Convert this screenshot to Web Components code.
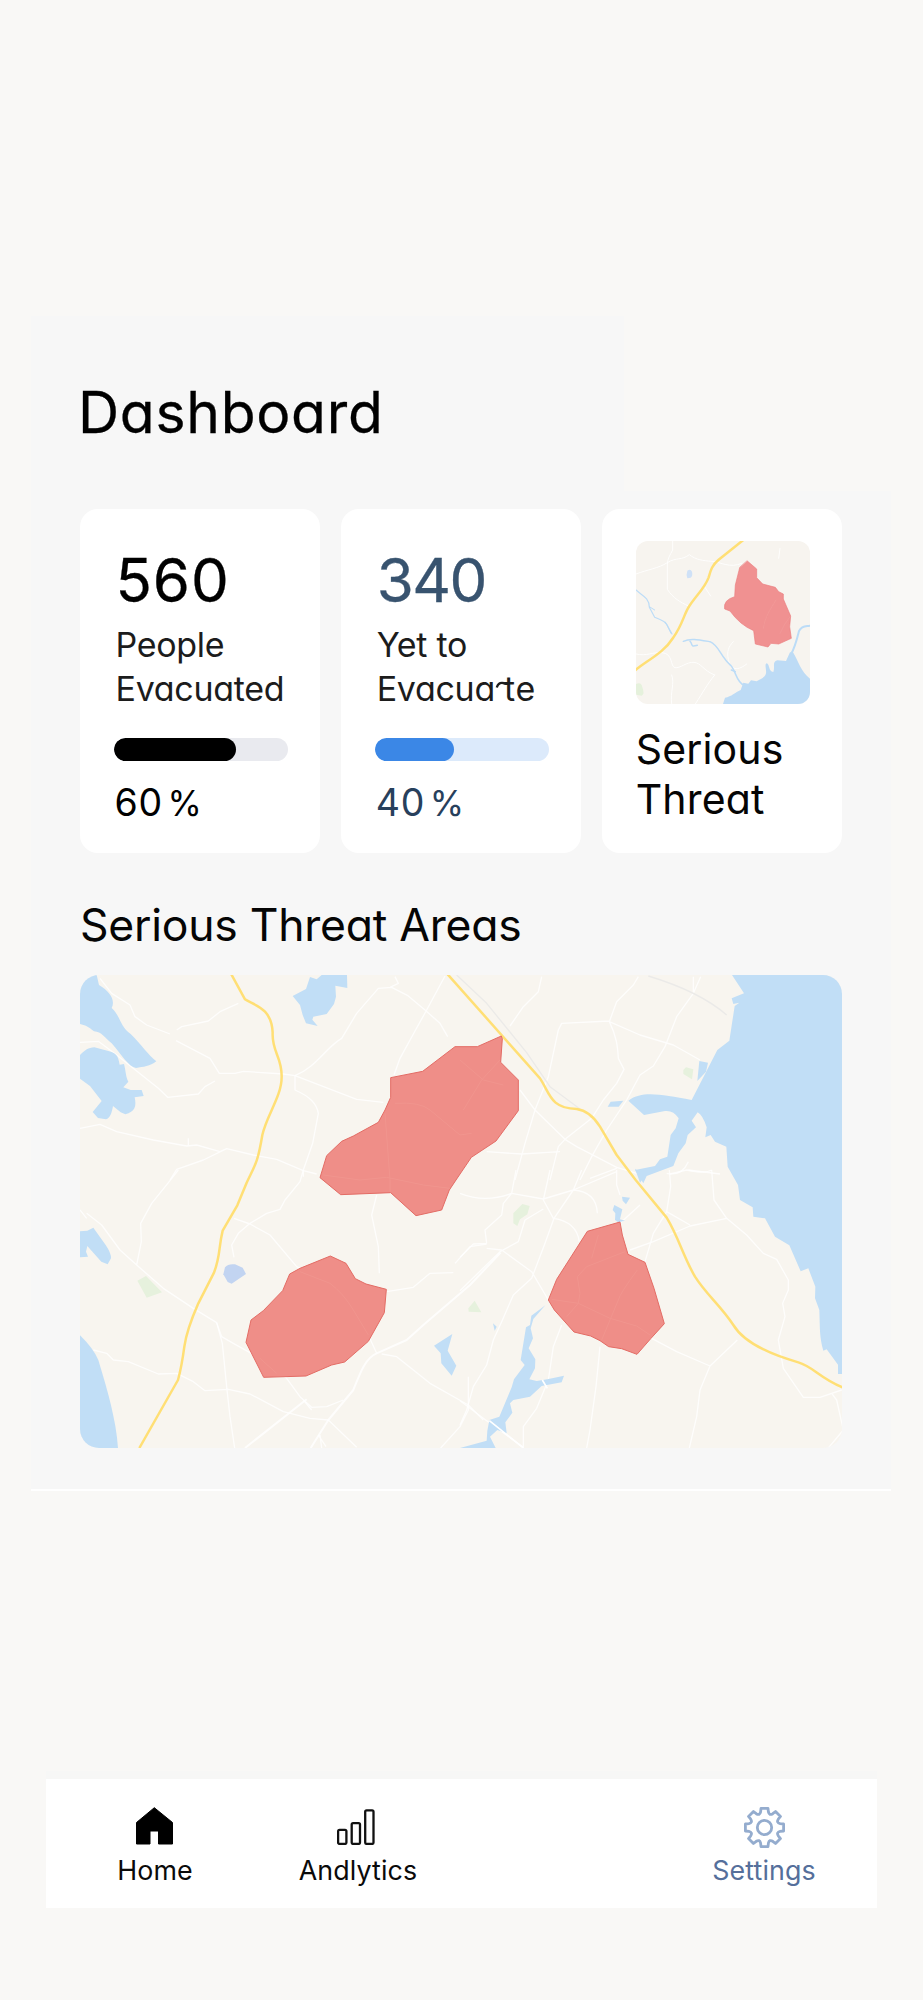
<!DOCTYPE html>
<html lang="en">
<head>
<meta charset="utf-8">
<title>Dashboard</title>
<style>
  html, body { margin: 0; background: #f9f8f6; }
  body { font-family: Inter, "Liberation Sans", sans-serif; font-feature-settings: "cv11"; color: #050505; }
</style>
</head>
<body>
<app-shell>
  <dash-board slot="main" heading="Dashboard">
    <stat-card slot="card" value="560" percent="60" fill="70.2"
      style="--value:#000;--value-gap:.9px;--bar:#000;--track:#e9eaef;--pct:#000">
      <span>People</span><span>Evacuated</span>
    </stat-card>
    <stat-card slot="card" value="340" percent="40" fill="45.2"
      style="--value:#38536f;--value-gap:-1.5px;--bar:#3b87e6;--track:#dceafb;--pct:#27405c">
      <span>Yet to</span><span>Evacua<joined-te></joined-te></span>
    </stat-card>
    <threat-card slot="card"><span>Serious</span><span>Threat</span></threat-card>
    <threat-map slot="map"></threat-map>
  </dash-board>
  <nav-bar slot="nav">
    <nav-item icon="home">Home</nav-item>
    <nav-item icon="bars">Andlytics</nav-item>
    <nav-item icon="gear" style="grid-column:4;color:#556f9b">Settings</nav-item>
  </nav-bar>
</app-shell>

<script>
const define = (name, html, setup) => customElements.define(name, class extends HTMLElement {
  constructor() {
    super();
    this.attachShadow({ mode: "open" }).innerHTML = html;
  }
  connectedCallback() { if (setup) setup(this, this.shadowRoot); }
});

define("app-shell", `
<style>
  :host { display: flex; flex-direction: column; box-sizing: border-box; height: 2000px; padding: 316px 0 92px; justify-content: space-between; }
</style>
<slot name="main"></slot><slot name="nav"></slot>`);

define("dash-board", `
<style>
  :host { display: block; box-sizing: border-box; width: 860px; height: 1175px; margin-left: 31px; padding: 66.5px 49px 0;
    border-bottom: 2px solid #fff;
    background: linear-gradient(#f7f7f7,#f7f7f7) 0 0 / 593px 100% no-repeat, linear-gradient(#f7f7f7,#f7f7f7) 0 175px / 100% 1000px no-repeat; }
  h1 { margin: 0 0 66px -2px; font: 400 57px/60px Inter, sans-serif; letter-spacing: .7px; color: #000; font-feature-settings: inherit; -webkit-text-stroke: .3px; }
  h2 { margin: 47px 0 25px; font: 400 44.5px/50px Inter, sans-serif; letter-spacing: -.25px; font-feature-settings: inherit; color: #050505; }
  .cards { display: grid; grid-template-columns: repeat(3, 1fr); gap: 21.5px; height: 344.5px; }
</style>
<h1></h1>
<div class="cards"><slot name="card"></slot></div>
<h2>Serious Threat Areas</h2>
<slot name="map"></slot>`,
(el, root) => { root.querySelector("h1").textContent = el.getAttribute("heading"); });

define("stat-card", `
<style>
  :host { display: block; background: #fff; border-radius: 18px; padding: 41px 32px 0 34px; }
  .value { padding-left: 1.5px; font-size: 60px; line-height: 60px; letter-spacing: var(--value-gap); color: var(--value); -webkit-text-stroke: .3px; }
  .label { display: flex; flex-direction: column; margin: 13.5px 0 27.5px; padding-left: 1.5px; font-size: 34px; line-height: 43.5px; letter-spacing: -.3px; color: #1c1c1c; white-space: nowrap; }
  .track { height: 23px; border-radius: 12px; background: var(--track); overflow: hidden; }
  .bar { height: 100%; border-radius: 12px; background: var(--bar); }
  .pct { margin-top: 22.5px; padding-left: .5px; display: flex; align-items: baseline; gap: 4.5px; font-size: 37.5px; line-height: 40px; letter-spacing: .8px; color: var(--pct); }
  .pct i { font-style: normal; font-size: 35px; letter-spacing: 0; }
</style>
<div class="value"></div>
<div class="label"><slot></slot></div>
<div class="track"><div class="bar"></div></div>
<div class="pct"><b style="font-weight:400"></b><i>%</i></div>`,
(el, root) => {
  root.querySelector(".value").textContent = el.getAttribute("value");
  root.querySelector(".bar").style.width = el.getAttribute("fill") + "%";
  root.querySelector("b").textContent = el.getAttribute("percent");
});

// "te" whose crossbar reaches back toward the preceding letter
define("joined-te", `
<style>
  :host { display: inline-block; position: relative; padding-left: 9px; letter-spacing: .8px; }
  svg { position: absolute; left: 1px; top: 0; width: 20px; height: 43.5px; overflow: visible; }
</style>te<svg viewBox="0 0 20 43.5"><path d="M.8 20.5C1.8 17.2 3.6 15.9 6 15.9c1.8 0 2.6.9 6 .9" fill="none" stroke="#1c1c1c" stroke-width="2.4"/></svg>`);

define("threat-card", `
<style>
  :host { display: block; background: #fff; border-radius: 18px; padding: 32px 31px 0 33.4px; }
  svg { display: block; width: 174px; height: 163px; border-radius: 12px; }
  .t { display: flex; flex-direction: column; margin-top: 20px; font-size: 41px; line-height: 50px; letter-spacing: .15px; color: #050505; }
</style>
<svg viewBox="138 123 522 489" fill="none" stroke-linecap="round" stroke-linejoin="round">
  <path fill="#f7f4ef" d="M138 123h522v489H138z"/>
  <g stroke="#fff" stroke-width="2.5">
    <path d="M138 222C175 208 205 205 232 188S275 182 298 164C318 180 340 182 366 184S420 206 455 190"/>
    <path d="M248 123V150C240 166 232 175 232 195V268C250 295 270 306 295 318M345 262L362 288M570 145L566 175"/>
    <path d="M138 462C170 470 190 455 216 458C250 460 240 500 255 503S290 485 312 487S340 512 374 525"/>
    <path d="M245 525C255 550 240 575 245 612M374 525C350 555 340 575 316 612M430 425C415 440 410 455 415 478S435 520 470 492M470 310L495 325" />
  </g>
  <path d="M138 552q16-8 19 10q8 20-2 25l-17-3z" fill="#e5f1dc"/>
  <path d="M292 212q10-6 14 3q3 12-4 18l-10 2q-4-12 0-23z" fill="#cfe1f7"/>
  <g stroke="#bcdcf7" stroke-width="4.5">
    <path d="M138 270C153 285 178 292 178 322L194 352C214 362 219 357 231 374L246 402" stroke-width="3.5"/>
    <path d="M226 366L243 400M178 320L194 330" stroke-width="3"/>
    <path d="M280 424C300 414 325 419 360 425C388 437 390 468 422 496C438 513 438 545 462 556"/>
    <path d="M300 424C310 435 300 442 322 436M424 510L436 515"/>
    <path d="M603 463C616 440 621 417 627 393C637 375 650 380 660 377" stroke-width="6"/>
  </g>
  <path fill="#bddbf5" d="M399 612L405 593C425 590 435 577 452 570L460 548L475 551L483 541L500 544C515 533 525 534 528 520C530 508 522 492 531 490C540 496 535 514 550 516C556 500 545 486 562 481L588 483L600 457H609C626 485 632 514 660 536V612z"/>
  <path stroke="#ffdf75" stroke-width="7.5" stroke-linecap="butt" d="M134 512C170 482 222 458 249 414C280 370 280 345 298 318C320 285 345 263 356 232C362 210 367 195 385 180L460 120"/>
  <path fill="#f09191" stroke="#eb7f80" stroke-width="2" d="M472 183L500 207V233L518 252L556 262L566 275L580 282V297L602 348L599 380L604 415L566 432L543 430L534 441L496 432L491 392Q450 375 420 333L404 327Q399 300 434 290L436 255L449 203z"/>
  <path stroke="#f29b9a" stroke-width="2" d="M558 300C540 330 525 350 520 385M600 350Q580 375 570 400"/>
</svg>
<div class="t"><slot></slot></div>`);

define("threat-map", `
<style>:host { display: block; height: 473px; } svg { display: block; width: 762px; height: 473px; border-radius: 19px; }</style>
<svg viewBox="30 285 2286 1419" preserveAspectRatio="none" fill="none" stroke-linejoin="round">
  <path fill="#f8f5ef" d="M30 285h2286v1419H30z"/>
  <g stroke="#fff" stroke-width="4" stroke-opacity=".8">
    <path d="M90 295L125 340L180 375L195 410L230 435L300 462M320 450L335 440L415 423L450 395L505 370M318 482L420 535L448 580H495L520 574L640 582L675 587L860 658L940 667"/>
    <path d="M30 487L85 484L140 525L215 585L265 625L293 652L385 642L405 620L435 603"/>
    <path d="M675 587C740 560 770 500 815 475L860 400L925 325L965 322L1012 346L1065 390L1110 430L1133 470M975 290L985 310L960 322M1125 288L1070 390L1030 462L990 535L972 585"/>
    <path d="M675 587V630C720 650 740 670 745 700L728 790L700 870V890M30 745L90 733L140 755L250 780L350 798L380 795L450 815L470 806L550 825L620 838L700 872L740 882M470 806L400 840L320 868L300 900M355 775V800"/>
    <g transform="translate(0 870)">
      <path d="M325 0L300 32L245 100L212 160L214 215L200 285L280 355L370 415L440 458L455 500L490 520L580 570L650 625L690 680L725 712L770 710L820 690M30 120L50 145M50 130L95 165L150 240L200 285"/>
      <path d="M700 0L690 35L645 90L630 118L590 130L540 160L505 190L485 225L492 262M492 145L540 162L600 195L680 290L780 340L860 420L920 550M920 75L905 135L925 230L928 310"/>
      <path d="M70 540L110 550L130 570L175 575L265 612L320 610L370 635L405 662L475 658L540 672L640 725L720 745L775 750L860 832M440 458L457 520L470 650L480 740L494 834"/>
      <path stroke-width="6" d="M525 834L710 688M722 834L775 750L850 660C870 610 885 565 920 550L1010 510L1060 465L1200 345L1292 248"/>
      <path d="M935 552L980 560L1080 640L1195 705L1240 750M1195 620V720L1170 770L1112 834M950 365L1030 352L1080 310L1150 308M1155 280L1200 230L1250 222M700 690L725 720M750 795L755 834M745 795L768 830"/>
    </g>
    <g transform="translate(1170 0)">
      <path d="M245 290L235 335L190 380L150 438M535 290L520 315L470 365L448 425C470 470 473 500 475 535L492 568L470 610L430 660L395 715L315 778M448 423L305 430L295 450L265 590L225 690L195 790L165 900M448 425L540 465L640 495L720 540M722 290L700 340L650 410L615 500L580 558L540 585L500 660L440 750L395 830L360 900M700 290V340M180 630L225 690L315 778L350 800L470 862L530 880M80 815L185 822L300 815M315 778L295 800L270 900M390 895L470 865"/>
      <path d="M620 880Q665 890 685 845M685 870L780 882"/>
    </g>
    <g transform="translate(1170 870)">
      <path d="M0 70Q75 100 155 70L250 87L340 60L470 5M168 0L155 70L130 100L125 135L75 180L80 220M365 0L340 60L282 145L255 220L215 325L160 375L125 455L100 510L80 585L40 650L20 720L0 765M340 60Q410 65 412 130M270 0L250 90L280 145Q350 155 358 215M80 220L40 222L0 262M80 235L125 240L215 305L265 390M0 362L120 245L175 215L195 150L250 117M470 0V45L480 75M480 160L540 105"/>
      <path d="M628 0L632 50L620 125L580 190L555 275M510 240L580 215L690 168L800 145M755 0L762 90L800 145L860 195L910 250L950 268L985 330V360L968 400L975 440L955 510L970 595L1030 682H1080L1145 660M620 125L690 165M1115 670L1130 690L1140 735L1150 780L1105 834M832 510L750 588L720 660L710 740L688 834M575 505L650 545L750 588"/>
      <path d="M0 692L80 752L190 832M420 530L408 650L390 780L380 834M305 465L280 530L265 630L230 715L190 770V834M630 12L680 0Q735 12 755 0"/>
    </g>
  </g>
  <g stroke="#ebeae8" stroke-width="4">
    <path d="M1160 285L1250 370L1370 518L1440 620L1530 687M1735 288Q1890 335 1970 405"/>
  </g>
  <g fill="#e6f1dd">
    <path d="M202 1202L228 1188L276 1237L230 1253zM1840 570L1848 562L1870 568L1866 598L1840 582zM1330 1000L1357 972L1379 978L1372 1003L1350 1018L1342 1038L1330 1030zM1195 1285L1214 1262L1234 1297L1196 1295z"/>
  </g>
  <g fill="#c1def6">
    <path d="M30 285H80L87 315C120 335 137 360 125 384C150 405 150 440 182 462C215 495 235 525 259 544C240 560 220 560 198 564C175 560 155 525 125 490C105 475 95 455 72 454C55 440 45 435 30 432z"/>
    <path d="M30 525C45 510 55 503 73 502L115 513C145 520 145 535 149 554L162 552C168 575 167 590 175 605L160 622L182 630L215 630L221 648L194 652C200 680 195 695 166 703L152 697L129 678C125 700 120 715 108 718L84 714L68 696L95 663L60 618L30 596z"/>
    <path d="M720 291L740 298L755 285H831L832 324L796 317L798 350L792 372L770 402L730 410L727 419L743 438L708 430L698 405L690 375L668 348L708 327z"/>
    <path d="M30 1054L52 1052L70 1043L107 1095Q124 1120 123 1135L113 1153L94 1145L52 1098L48 1115L54 1130L30 1132z"/>
    <path d="M30 1366Q70 1405 85 1440C115 1540 138 1620 144 1704H30z"/>
    <path d="M1092 1397L1147 1362L1133 1412L1159 1457L1145 1487L1114 1450L1112 1420z"/>
    <path d="M1269 1330L1280 1340L1274 1352z"/>
    <g transform="translate(1170 0)">
      <path d="M816 285H1146V1482H1134V1454L1100 1408L1090 1412C1078 1370 1080 1345 1078 1290L1065 1255L1066 1220L1045 1165L1022 1174L988 1096L945 1070L915 1015L880 1010L878 982L840 960L834 915L803 860L799 800L765 785L752 765L736 772L740 742Q728 705 713 697L695 722L708 742L683 765L677 790L655 820L640 858L560 888L550 910L525 870L585 858L600 838L622 830L632 765L647 745L656 715Q640 690 615 693L552 705L505 662C550 630 605 645 695 660L772 510L808 482L824 378L838 368L820 372L815 355L852 340z"/>
      <path d="M443 680L452 665L490 662L476 680zM718 543L744 548L738 575L712 603z"/>
      <path d="M525 866L540 908L555 888z"/>
      <path d="M463 975L487 988L480 1018L495 1022L475 1027L465 1020L466 1000L458 990zM486 950L510 953L498 973L488 962z"/>
    </g>
    <path transform="translate(1170 870)" d="M256 406L220 447L212 475L219 505L206 535L226 568L225 595L208 628L230 633L262 628L312 617L305 637L245 648L210 680L160 690L150 700L157 728L136 757L140 790L112 780L90 800L107 834H0L80 812L82 782L88 750L118 740L155 652L162 628L194 585L182 570L198 472L210 465L214 437z"/>
    <path fill="#c2d4f1" d="M465 1162Q475 1150 495 1153L518 1163L528 1182L485 1211L473 1206L460 1183z"/>
  </g>
  <path stroke="#fff" stroke-width="5" d="M1258 1622L1360 1704M1417 1500L1432 1525"/>
  <path stroke="#ffdf75" stroke-width="7.5" d="M484 283L525 358C550 375 605 382 608 458C605 515 636 530 635 590C635 650 590 705 577 765C563 850 555 855 530 908L502 976L458 1052C445 1105 452 1125 432 1178L385 1270Q350 1350 343 1400Q335 1460 324 1500L208 1704M1133 283L1410 595C1440 640 1440 685 1520 687Q1560 692 1590 740L1640 825L1697 900L1790 1013C1825 1070 1840 1130 1875 1190C1910 1245 1950 1275 1990 1335C2020 1385 2090 1420 2185 1447C2230 1460 2250 1495 2318 1522"/>
  <g fill="#ef8e88" stroke="#e36c65" stroke-width="3">
    <path d="M962 593L1058 574L1155 500H1222L1294 468L1297 476L1292 547L1345 600V692L1278 783L1204 832L1160 897L1138 930L1115 990L1038 1007L962 938L812 944L750 893L770 827L815 784L850 768L925 727L945 690L962 652z"/>
    <path d="M781 1128L828 1150L856 1196L888 1212L949 1228L943 1298L895 1384L824 1446L785 1455L708 1488L581 1492L528 1387L543 1320L580 1292L638 1232L659 1182L690 1165z"/>
    <path transform="translate(1170 870)" d="M480 156L487 195L504 253L555 277L582 355L613 461L573 505L531 553L485 536L446 530L420 512L392 498L342 486L283 420L265 390L290 328L382 184z"/>
  </g>
  <g stroke="#f1958e" stroke-width="3">
    <path d="M945 700L960 900V935M975 670Q1050 665 1080 690L1170 765L1205 760M1170 540L1240 600L1300 615M1290 540L1235 600L1180 690M760 885L870 900L950 892L1060 915L1140 925M690 1175L780 1210Q820 1240 850 1290L895 1365M570 1435L620 1480"/>
    <path transform="translate(1170 870)" d="M275 388L355 400L450 445L530 468L570 495M355 400L360 370L352 320L380 290L495 245M320 440L355 400M532 300Q480 370 475 390L425 510M415 195L395 265"/>
  </g>
</svg>`);

define("nav-bar", `
<style>
  :host { display: grid; grid-template-columns: repeat(4, 203px); box-sizing: border-box; width: 831px; height: 137px; margin-left: 46px; padding: 0 0 0 7.5px; background: #fff; border-top: 8px solid #f7f7f6; }
</style><slot></slot>`);

const gearPath = (() => {
  const spot = (x, y, a) => {
    const c = Math.cos(a), s = Math.sin(a);
    return (20.5 + x * c - y * s).toFixed(2) + " " + (20.5 + x * s + y * c).toFixed(2);
  };
  let d = "";
  for (let i = 0; i < 8; i++) {
    const a = i * Math.PI / 4, n = a + Math.PI / 8;
    d += (i ? "L" : "M") + spot(-3.9, -15.6, a) + "L" + spot(-3.5, -19.1, a) + "L" + spot(3.5, -19.1, a) + "L" + spot(3.9, -15.6, a) +
      "Q" + spot(0, -12.6, n) + " " + spot(-3.9, -15.6, a + Math.PI / 4);
  }
  return d + "Z";
})();

const icons = {
  home: `<svg width="37" height="38" viewBox="0 0 37 38" style="margin-right:1.5px"><path fill="#000" stroke="#000" stroke-linejoin="round" d="M18.3 .7L36.5 15.5V37H22.5V24H14V37H.5V15.5z"/></svg>`,
  bars: `<svg width="38" height="38" viewBox="0 0 38 38" fill="#fff" stroke="#111" stroke-width="2.3" style="margin-right:4px"><rect x="1.1" y="22.9" width="8.3" height="14" rx="1.4"/><rect x="14.7" y="16.1" width="8.3" height="20.8" rx="1.4"/><rect x="28.2" y="3.3" width="8.3" height="33.6" rx="1.4"/></svg>`,
  gear: `<svg width="41" height="41" viewBox="0 0 41 41" fill="none" stroke="#94acce" stroke-width="2.8" stroke-linejoin="round"><circle cx="20.5" cy="20.5" r="7.2"/><path d="${gearPath}"/></svg>`
};

define("nav-item", `
<style>
  :host { display: flex; flex-direction: column; align-items: center; font-size: 26.8px; line-height: 30px; letter-spacing: .1px; color: #0a0a0a; }
  .icon { display: flex; height: 48px; padding-top: 28px; }
</style>
<div class="icon"></div><div><slot></slot></div>`,
(el, root) => { root.querySelector(".icon").innerHTML = icons[el.getAttribute("icon")]; });
</script>
</body>
</html>
